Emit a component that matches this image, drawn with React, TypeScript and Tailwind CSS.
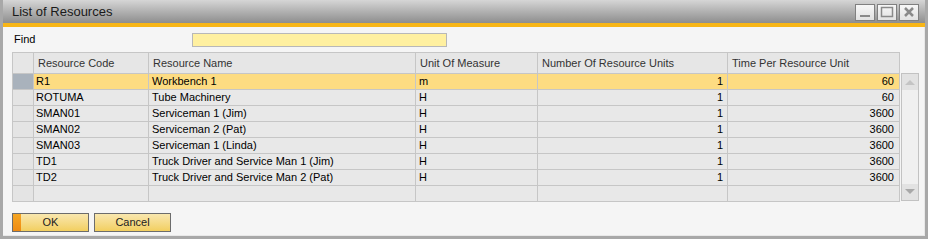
import React from 'react';

type Row = { code: string; name: string; uom: string; units: string; time: string };

const ROWS: Row[] = [
  { code: 'R1', name: 'Workbench 1', uom: 'm', units: '1', time: '60' },
  { code: 'ROTUMA', name: 'Tube Machinery', uom: 'H', units: '1', time: '60' },
  { code: 'SMAN01', name: 'Serviceman 1 (Jim)', uom: 'H', units: '1', time: '3600' },
  { code: 'SMAN02', name: 'Serviceman 2 (Pat)', uom: 'H', units: '1', time: '3600' },
  { code: 'SMAN03', name: 'Serviceman 1 (Linda)', uom: 'H', units: '1', time: '3600' },
  { code: 'TD1', name: 'Truck Driver and Service Man 1 (Jim)', uom: 'H', units: '1', time: '3600' },
  { code: 'TD2', name: 'Truck Driver and Service Man 2 (Pat)', uom: 'H', units: '1', time: '3600' },
];

const COLS = 'grid grid-cols-[21px_115px_267px_122px_190px_172px]';
const cell = 'border-r border-b border-[#c6c6c6] truncate leading-[15px]';

function TitleButton({ kind }: { kind: 'min' | 'max' | 'close' }) {
  return (
    <div className="w-[20px] h-[17px] border border-[#808080] bg-gradient-to-b from-[#f7f7f7] to-[#e2e2e2] flex items-center justify-center">
      <svg width="14" height="12" viewBox="0 0 14 12">
        {kind === 'min' && <rect x="2" y="9" width="10" height="2" fill="#8a8a8a" />}
        {kind === 'max' && (
          <rect x="1.5" y="1.5" width="11" height="9" fill="none" stroke="#8a8a8a" strokeWidth="1.5" />
        )}
        {kind === 'close' && (
          <path d="M3 2 L11 10 M11 2 L3 10" stroke="#8a8a8a" strokeWidth="2.5" />
        )}
      </svg>
    </div>
  );
}

export default function App() {
  return (
    <div className="w-[931px] h-[242px] bg-white" style={{ fontFamily: '"Liberation Sans", Arial, sans-serif' }}>
      <div className="w-[928px] h-[239px] flex flex-col border-l-[3px] border-r-[3px] border-b-[3px] border-l-[#a8a8a8] border-r-[#a8a8a8] border-b-[#a8a8a8] bg-[#f5f5f5]">
        {/* title bar */}
        <div className="h-[23px] shrink-0 flex items-center justify-between pl-[9px] pr-[6px] bg-gradient-to-b from-[#d6d6d6] to-[#8e8e8e]">
          <span className="text-[13px] text-[#1a1a1a]">List of Resources</span>
          <div className="flex gap-[2px] pt-[1px]">
            <TitleButton kind="min" />
            <TitleButton kind="max" />
            <TitleButton kind="close" />
          </div>
        </div>
        <div className="h-[4px] shrink-0 bg-[#f8b617]" />

        {/* body */}
        <div className="flex-1 pl-[9px] pt-[6px] text-[11px] text-black border-r border-b border-[#e8e8e8]">
          <div className="flex items-center h-[13px]">
            <span className="w-[180px] pl-[2px]">Find</span>
            <div className="w-[255px] h-[14px] bg-[#fff0a0] border border-[#b8b8b8]" />
          </div>

          <div className="mt-[6px] flex">
            <div className="border-l border-t border-[#c6c6c6]">
              {/* header */}
              <div className={`${COLS} h-[21px] bg-[#e6e6e6] text-[#333]`}>
                <div className={cell} />
                <div className={`${cell} pl-[4px] pt-[3px]`}>Resource Code</div>
                <div className={`${cell} pl-[4px] pt-[3px]`}>Resource Name</div>
                <div className={`${cell} pl-[4px] pt-[3px]`}>Unit Of Measure</div>
                <div className={`${cell} pl-[4px] pt-[3px]`}>Number Of Resource Units</div>
                <div className={`${cell} pl-[4px] pt-[3px]`}>Time Per Resource Unit</div>
              </div>
              {ROWS.map((r, i) => {
                const bg = i === 0 ? 'bg-[#fddc82]' : 'bg-[#e8e8e8]';
                return (
                  <div key={r.code} className={`${COLS} h-[16px]`}>
                    <div className={`${cell} ${i === 0 ? 'bg-[#a9b2bc]' : 'bg-[#e4e4e4]'}`} />
                    <div className={`${cell} ${bg} pl-[2px]`}>{r.code}</div>
                    <div className={`${cell} ${bg} pl-[3px]`}>{r.name}</div>
                    <div className={`${cell} ${bg} pl-[3px]`}>{r.uom}</div>
                    <div className={`${cell} ${bg} pr-[4px] text-right`}>{r.units}</div>
                    <div className={`${cell} ${bg} pr-[5px] text-right`}>{r.time}</div>
                  </div>
                );
              })}
              <div className={`${COLS} h-[16px]`}>
                <div className={`${cell} bg-[#e4e4e4]`} />
                <div className={`${cell} bg-[#e8e8e8]`} />
                <div className={`${cell} bg-[#e8e8e8]`} />
                <div className={`${cell} bg-[#e8e8e8]`} />
                <div className={`${cell} bg-[#e8e8e8]`} />
                <div className={`${cell} bg-[#e8e8e8]`} />
              </div>
            </div>

            {/* scrollbar */}
            <div className="mt-[21px] ml-[1px] w-[18px] h-[128px] border border-[#c2c2c2] bg-[#f0f0f0] flex flex-col justify-between">
              <div className="h-[16px] bg-[#e2e2e2] flex items-center justify-center">
                <svg width="10" height="6" viewBox="0 0 10 6"><path d="M0 6 L5 1 L10 6 Z" fill="#c4c4c4" /></svg>
              </div>
              <div className="h-[16px] bg-[#e2e2e2] flex items-center justify-center">
                <svg width="10" height="6" viewBox="0 0 10 6"><path d="M0 0 L10 0 L5 5 Z" fill="#a8a8a8" /></svg>
              </div>
            </div>
          </div>

          <div className="mt-[11px] flex gap-[5px]">
            <button className="relative w-[77px] h-[19px] border border-[#6c6c6c] bg-gradient-to-b from-[#f9e7ae] to-[#f2cf5e] text-[11px] text-[#222] leading-[17px]">
              <span className="absolute left-0 top-0 bottom-0 w-[8px] bg-gradient-to-b from-[#f5a623] to-[#ee8a12]" />
              OK
            </button>
            <button className="w-[77px] h-[19px] border border-[#6c6c6c] bg-gradient-to-b from-[#f9e7ae] to-[#f2cf5e] text-[11px] text-[#222] leading-[17px]">
              Cancel
            </button>
          </div>
        </div>
      </div>
    </div>
  );
}
